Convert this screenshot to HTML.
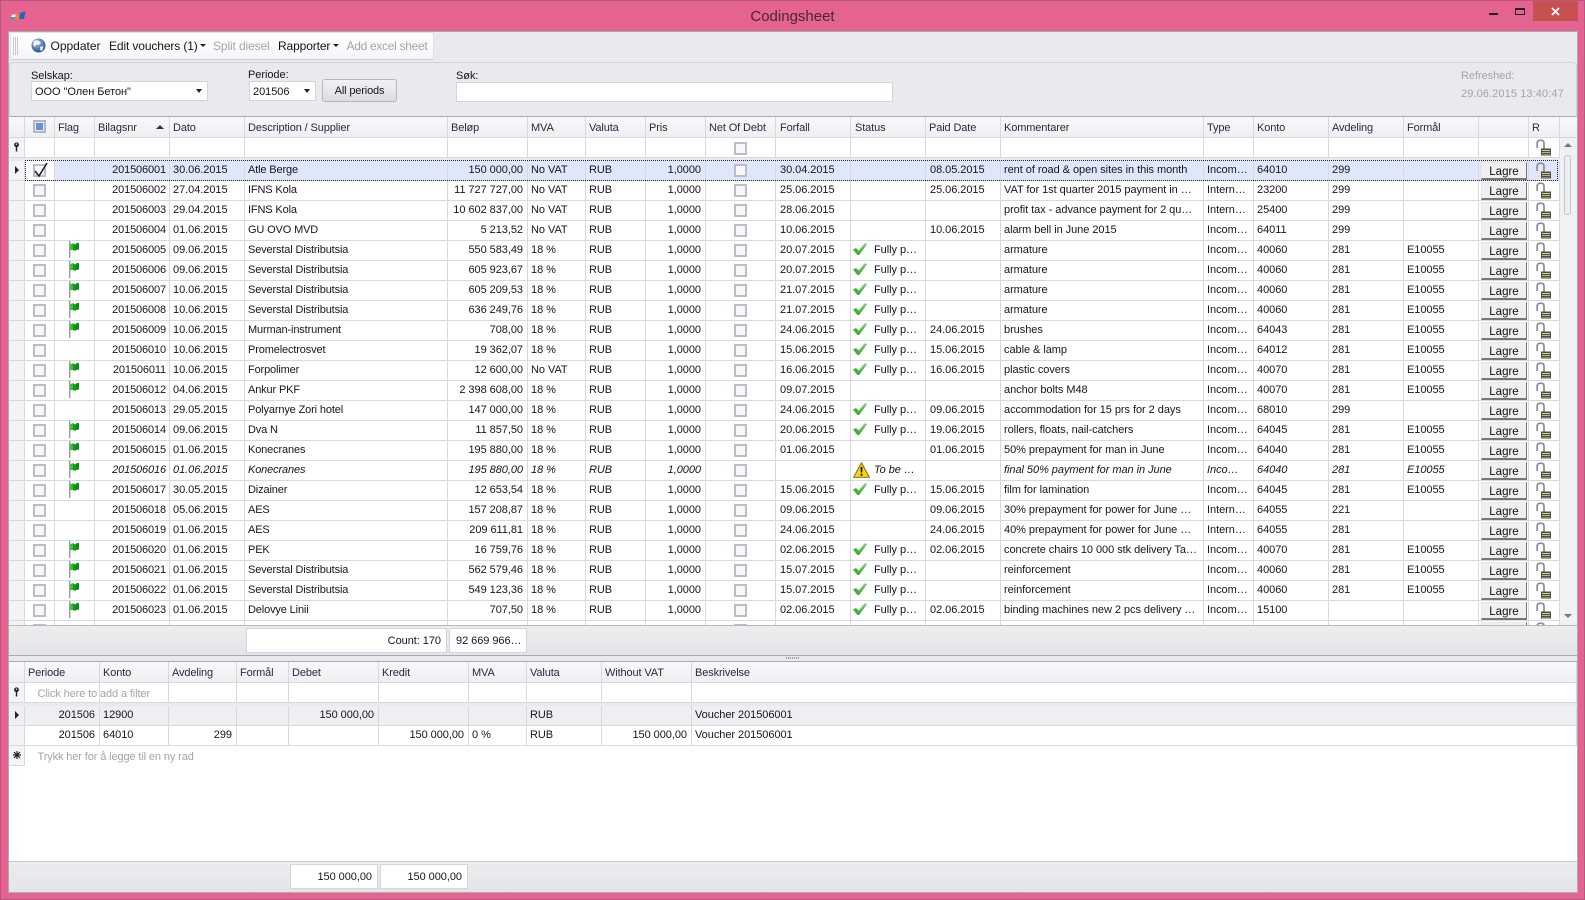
<!DOCTYPE html>
<html><head><meta charset="utf-8"><title>Codingsheet</title>
<style>
*{box-sizing:border-box}
html,body{margin:0;padding:0;width:1585px;height:900px;overflow:hidden}
body{position:relative;background:#e46390;font:11px "Liberation Sans","Noto Sans CJK SC",sans-serif;letter-spacing:-.05px;color:#15151f;box-shadow:inset 0 0 0 1px #b9587e}
.a{position:absolute}
.t{position:absolute;white-space:nowrap;line-height:14px}
.tb{font-size:12px;letter-spacing:-.12px}
#win{position:absolute;left:8px;top:31px;width:1570px;height:862px;background:#e9eaee;border:1px solid #a9aab4}
table{position:absolute;left:0;table-layout:fixed;border-collapse:separate;border-spacing:0}
td,th{position:relative;padding:0 3px;border-right:1px solid #d8d9e0;border-bottom:1px solid #d8d9e0;white-space:nowrap;overflow:hidden;font-weight:400;text-align:left;vertical-align:top;line-height:19px;height:20px;background:#fff}
th{height:21px;line-height:18px;padding-top:2px;letter-spacing:-.12px;background:linear-gradient(#f8f8fa,#eeeff2);color:#2a2a3e}
td.i{background:#f3f4f7;padding:0}
td.r{text-align:right;padding-right:4px}
#up td:nth-child(4){letter-spacing:-.13px;padding-right:3px}
#up td:nth-child(6){letter-spacing:-.14px}
#up td:nth-child(12),#up td:nth-child(14),#up th:nth-child(12),#up th:nth-child(13){padding-left:4px}
tr.b td{height:3px;padding:0;border:0;background:#e9eaee;font-size:0;line-height:0}
tr.sel td{background:#dfe8fa}
tr.sel td.k{background:#fff}
tr.sel td.i{background:#f3f4f7}
tr.it td{font-style:italic}
tr.g td{background:#eeeff2}
i.c{position:absolute;width:13px;height:13px;top:3px;left:8px;border:2px solid #bcbdc9;background:#f7f7f8}
td.n i.c{left:28px}
svg.f{position:absolute;left:13px;top:0;width:12px;height:17px}
svg.o{position:absolute;left:2px;top:2px;width:14px;height:12px}
svg.w{position:absolute;left:2px;top:1px;width:17px;height:16px}
svg.l{position:absolute;left:7px;top:1px;width:15px;height:17px}
b.l{position:absolute;left:2px;top:1px;width:46px;height:18px;background:#f0f0f0;border:1px solid #e6e6e8;border-right:1px solid #77777b;border-bottom:2px solid #77777b;font-weight:400;font-style:normal;text-align:center;line-height:18px;color:#111;font-size:11.5px;letter-spacing:0}
td.s{padding-left:23px}
.tri{position:absolute;width:0;height:0;border-style:solid;border-color:transparent}
.dn{border-width:4px 3.5px 0;border-top-color:#222}
.up{border-width:0 4px 4px;border-bottom-color:#333}
.rt{border-width:4px 0 4px 4px;border-left-color:#222}
.box{position:absolute;background:#fff;border:1px solid #d4d5dc;white-space:nowrap;text-align:right;line-height:24px;padding:0 5px}
.foot{position:absolute;left:9px;width:1568px;background:linear-gradient(#eceded,#e3e4e9)}
.gray{color:#a3a3ae}
</style></head>
<body>
<svg width="0" height="0" style="position:absolute"><defs>
<symbol id="fl" viewBox="0 0 12 17"><rect x="1" y="0" width="1.4" height="17" fill="#9a9a9e"/><path d="M2.4 3 L6 2 L6 9 L2.4 9Z" fill="#2fc22f"/><path d="M5 3 L8 3.2 L8 9.6 L5 9.4Z" fill="#139a13"/><path d="M8 2.2 L11 2 L11 8.5 L8 9Z" fill="#0f8a1f"/></symbol>
<symbol id="ok" viewBox="0 0 14 12"><path d="M0 6.5 L3 5 L5.5 7.5 L11.5 0.5 L14 1 L6.2 12 L4.3 12Z" fill="#46ad3f"/><path d="M3 5 L5.5 7.5 L11.5 .5 L14 1 L6 8.5Z" fill="#7fd36f"/></symbol>
<symbol id="wa" viewBox="0 0 17 16"><path d="M8.5 .7 L16.3 15.3 L.7 15.3Z" fill="#f6d41e" stroke="#9a7f10" stroke-width="1.2" stroke-linejoin="round"/><path d="M7.5 5 H9.5 L9.2 10.5 H7.8Z M7.6 11.8 H9.4 V13.6 H7.6Z" fill="#111"/></symbol>
<symbol id="lk" viewBox="0 0 15 17"><path d="M1.2 9 V4 Q1.2 1.2 4.5 1.2 Q8 1.2 8 4 V9.5" fill="none" stroke="#8c8d91" stroke-width="1.7"/><rect x="5" y="9.5" width="10" height="7" fill="#4c4c48"/><rect x="6" y="11" width="8" height="1" fill="#d5cf96"/><rect x="6" y="13" width="8" height="1" fill="#bdb67f"/><rect x="6" y="15" width="8" height="1" fill="#8f8a60"/></symbol>
<symbol id="pin" viewBox="0 0 7 10"><circle cx="3.5" cy="2.8" r="2.4" fill="#222"/><circle cx="3.5" cy="2.2" r=".8" fill="#ddd"/><rect x="2.8" y="5" width="1.4" height="4.5" fill="#222"/></symbol>
</defs></svg>

<!-- title bar -->
<svg class="a" style="left:10px;top:11px" width="16" height="9" viewBox="0 0 16 9"><path d="M0 6 H5 L4 8.5 H0Z" fill="#39a6a0"/><path d="M2 3.5 L6 3.5 L5 6 H1Z" fill="#e9edf2"/><path d="M6 3 L10 3 L9 8 H5Z" fill="#e8892c"/><path d="M10 2 L15.5 .3 L14 8 H9Z" fill="#1f66c4"/></svg>
<div class="t" style="left:0;width:1585px;top:8px;text-align:center;font-size:15px;line-height:18px;letter-spacing:0;color:#4a2636">Codingsheet</div>
<div class="a" style="left:1489px;top:13px;width:9px;height:2px;background:#2a1c22"></div>
<div class="a" style="left:1515px;top:8px;width:10px;height:7px;border:1px solid #2a1c22;border-top-width:2px"></div>
<div class="a" style="left:1533px;top:1px;width:45px;height:20px;background:#c75050"></div>
<svg class="a" style="left:1551px;top:7px" width="9" height="9" viewBox="0 0 9 9"><path d="M1 1 L8 8 M8 1 L1 8" stroke="#fff" stroke-width="1.8"/></svg>

<div id="win"></div>

<!-- toolbar -->
<div class="a" style="left:10px;top:32px;width:424px;height:28px;background:linear-gradient(#fff,#f6f6f8);border:1px solid #e0e1e6;border-bottom:1px solid #cfd0d8;border-radius:2px"></div>
<div class="a" style="left:13px;top:37px;width:5px;height:18px;background:repeating-linear-gradient(90deg,#c8c9d0 0 1px,transparent 1px 2px)"></div>
<svg class="a" style="left:31px;top:38px" width="15" height="15" viewBox="0 0 15 15"><defs><radialGradient id="gl" cx=".4" cy=".3" r=".8"><stop offset="0" stop-color="#9fc4ef"/><stop offset="1" stop-color="#1e3f86"/></radialGradient></defs><circle cx="7.5" cy="7.5" r="7" fill="url(#gl)"/><path d="M3 3 Q6 1.5 8 3 L10 5 L7.5 7 L5 6.5 L4 9 L2 7Z M9 9 L12.5 8 L11.5 12 L9.5 13Z" fill="#f2f5fa"/></svg>
<div class="t tb" style="left:50.5px;top:39px;letter-spacing:0">Oppdater</div>
<div class="t tb" style="left:109px;top:39px">Edit vouchers (1)</div>
<div class="tri dn" style="left:200px;top:44px;border-width:3px 3px 0"></div>
<div class="t gray tb" style="left:213px;top:39px">Split diesel</div>
<div class="t tb" style="left:278px;top:39px">Rapporter</div>
<div class="tri dn" style="left:333px;top:44px;border-width:3px 3px 0"></div>
<div class="t gray tb" style="left:346.5px;top:39px;letter-spacing:-.3px">Add excel sheet</div>

<!-- filter panel -->
<div class="a" style="left:9px;top:62px;width:1568px;height:55px;background:#e9eaee;border:1px solid #d2d3da;border-bottom:1px solid #a9aab4;border-radius:4px 4px 0 0"></div>
<div class="t" style="left:31px;top:69px">Selskap:</div>
<div class="a" style="left:31px;top:81px;width:177px;height:20px;background:#fff;border:1px solid #d4d5dc"></div>
<div class="t" style="left:35px;top:85px">ООО "Олен Бетон"</div>
<div class="tri dn" style="left:196px;top:89px"></div>
<div class="t" style="left:248px;top:68px">Periode:</div>
<div class="a" style="left:249px;top:81px;width:67px;height:20px;background:#fff;border:1px solid #d4d5dc"></div>
<div class="t" style="left:253px;top:85px">201506</div>
<div class="tri dn" style="left:304px;top:89px"></div>
<div class="a" style="left:322px;top:79px;width:75px;height:23px;background:linear-gradient(#f1f1f4,#dcdde3);border:1px solid #b5b6bf;border-radius:3px;text-align:center;line-height:23px;letter-spacing:-.15px">All periods</div>
<div class="t" style="left:456px;top:69px">Søk:</div>
<div class="a" style="left:456px;top:82px;width:437px;height:20px;background:#fff;border:1px solid #d4d5dc"></div>
<div class="t gray" style="left:1461px;top:69px">Refreshed:</div>
<div class="t gray" style="left:1461px;top:87px;letter-spacing:.1px">29.06.2015 13:40:47</div>

<!-- upper grid -->
<div id="up" class="a" style="left:9px;top:117px;width:1568px;height:508px;overflow:hidden;background:#fff">
<table style="top:0;width:1551px">
<colgroup><col style="width:16px"><col style="width:30px"><col style="width:40px"><col style="width:75px"><col style="width:75px"><col style="width:203px"><col style="width:80px"><col style="width:58px"><col style="width:60px"><col style="width:60px"><col style="width:70px"><col style="width:75px"><col style="width:75px"><col style="width:75px"><col style="width:203px"><col style="width:50px"><col style="width:75px"><col style="width:75px"><col style="width:75px"><col style="width:50px"><col style="width:31px"></colgroup>
<tr><th><th><i class="c" style="top:3px;left:8px;background:#6e8ed8;border-color:#b4b6c6;outline:1px solid #e8e8f0;outline-offset:-3px"></i><th>Flag<th>Bilagsnr<span class="tri up" style="left:61px;top:8px"></span><th>Dato<th>Description / Supplier<th>Beløp<th>MVA<th>Valuta<th>Pris<th>Net Of Debt<th>Forfall<th>Status<th>Paid Date<th>Kommentarer<th>Type<th>Konto<th>Avdeling<th>Formål<th><th>R
<tr><td class="i"><svg class="a" style="left:4px;top:4px" width="7" height="10"><use href="#pin"/></svg><td><td><td><td><td><td><td><td><td><td class="n"><i class="c" style="top:4px"></i><td><td><td><td><td><td><td><td><td><td><svg class="l"><use href="#lk"/></svg>
<tr class="b"><td colspan="21">
<tr class="sel"><td class="i"><span class="tri rt" style="left:6px;top:5px"></span><td class="k"><i class="c"></i><svg class="a" style="left:9px;top:1px" width="15" height="16" viewBox="0 0 15 16"><path d="M1 9 L5 14 L13 1" fill="none" stroke="#222" stroke-width="1.6"/></svg><td><td class="r">201506001<td>30.06.2015<td>Atle Berge<td class="r">150 000,00<td>No VAT<td>RUB<td class="r">1,0000<td class="n"><i class="c"></i><td>30.04.2015<td><td>08.05.2015<td>rent of road &amp; open sites in this month<td>Incom…<td>64010<td>299<td><td><b class="l">Lagre</b><td><svg class="l"><use href="#lk"/></svg>
<tr><td class="i"><td class="k"><i class="c"></i><td><td class="r">201506002<td>27.04.2015<td>IFNS Kola<td class="r">11 727 727,00<td>No VAT<td>RUB<td class="r">1,0000<td class="n"><i class="c"></i><td>25.06.2015<td><td>25.06.2015<td>VAT for 1st quarter 2015 payment in …<td>Intern…<td>23200<td>299<td><td><b class="l">Lagre</b><td><svg class="l"><use href="#lk"/></svg>
<tr><td class="i"><td class="k"><i class="c"></i><td><td class="r">201506003<td>29.04.2015<td>IFNS Kola<td class="r">10 602 837,00<td>No VAT<td>RUB<td class="r">1,0000<td class="n"><i class="c"></i><td>28.06.2015<td><td><td>profit tax - advance payment for 2 qu…<td>Intern…<td>25400<td>299<td><td><b class="l">Lagre</b><td><svg class="l"><use href="#lk"/></svg>
<tr><td class="i"><td class="k"><i class="c"></i><td><td class="r">201506004<td>01.06.2015<td>GU OVO MVD<td class="r">5 213,52<td>No VAT<td>RUB<td class="r">1,0000<td class="n"><i class="c"></i><td>10.06.2015<td><td>10.06.2015<td>alarm bell in June 2015<td>Incom…<td>64011<td>299<td><td><b class="l">Lagre</b><td><svg class="l"><use href="#lk"/></svg>
<tr><td class="i"><td class="k"><i class="c"></i><td><svg class="f"><use href="#fl"/></svg><td class="r">201506005<td>09.06.2015<td>Severstal Distributsia<td class="r">550 583,49<td>18 %<td>RUB<td class="r">1,0000<td class="n"><i class="c"></i><td>20.07.2015<td class="s"><svg class="o"><use href="#ok"/></svg>Fully p…<td><td>armature<td>Incom…<td>40060<td>281<td>E10055<td><b class="l">Lagre</b><td><svg class="l"><use href="#lk"/></svg>
<tr><td class="i"><td class="k"><i class="c"></i><td><svg class="f"><use href="#fl"/></svg><td class="r">201506006<td>09.06.2015<td>Severstal Distributsia<td class="r">605 923,67<td>18 %<td>RUB<td class="r">1,0000<td class="n"><i class="c"></i><td>20.07.2015<td class="s"><svg class="o"><use href="#ok"/></svg>Fully p…<td><td>armature<td>Incom…<td>40060<td>281<td>E10055<td><b class="l">Lagre</b><td><svg class="l"><use href="#lk"/></svg>
<tr><td class="i"><td class="k"><i class="c"></i><td><svg class="f"><use href="#fl"/></svg><td class="r">201506007<td>10.06.2015<td>Severstal Distributsia<td class="r">605 209,53<td>18 %<td>RUB<td class="r">1,0000<td class="n"><i class="c"></i><td>21.07.2015<td class="s"><svg class="o"><use href="#ok"/></svg>Fully p…<td><td>armature<td>Incom…<td>40060<td>281<td>E10055<td><b class="l">Lagre</b><td><svg class="l"><use href="#lk"/></svg>
<tr><td class="i"><td class="k"><i class="c"></i><td><svg class="f"><use href="#fl"/></svg><td class="r">201506008<td>10.06.2015<td>Severstal Distributsia<td class="r">636 249,76<td>18 %<td>RUB<td class="r">1,0000<td class="n"><i class="c"></i><td>21.07.2015<td class="s"><svg class="o"><use href="#ok"/></svg>Fully p…<td><td>armature<td>Incom…<td>40060<td>281<td>E10055<td><b class="l">Lagre</b><td><svg class="l"><use href="#lk"/></svg>
<tr><td class="i"><td class="k"><i class="c"></i><td><svg class="f"><use href="#fl"/></svg><td class="r">201506009<td>10.06.2015<td>Murman-instrument<td class="r">708,00<td>18 %<td>RUB<td class="r">1,0000<td class="n"><i class="c"></i><td>24.06.2015<td class="s"><svg class="o"><use href="#ok"/></svg>Fully p…<td>24.06.2015<td>brushes<td>Incom…<td>64043<td>281<td>E10055<td><b class="l">Lagre</b><td><svg class="l"><use href="#lk"/></svg>
<tr><td class="i"><td class="k"><i class="c"></i><td><td class="r">201506010<td>10.06.2015<td>Promelectrosvet<td class="r">19 362,07<td>18 %<td>RUB<td class="r">1,0000<td class="n"><i class="c"></i><td>15.06.2015<td class="s"><svg class="o"><use href="#ok"/></svg>Fully p…<td>15.06.2015<td>cable &amp; lamp<td>Incom…<td>64012<td>281<td>E10055<td><b class="l">Lagre</b><td><svg class="l"><use href="#lk"/></svg>
<tr><td class="i"><td class="k"><i class="c"></i><td><svg class="f"><use href="#fl"/></svg><td class="r">201506011<td>10.06.2015<td>Forpolimer<td class="r">12 600,00<td>No VAT<td>RUB<td class="r">1,0000<td class="n"><i class="c"></i><td>16.06.2015<td class="s"><svg class="o"><use href="#ok"/></svg>Fully p…<td>16.06.2015<td>plastic covers<td>Incom…<td>40070<td>281<td>E10055<td><b class="l">Lagre</b><td><svg class="l"><use href="#lk"/></svg>
<tr><td class="i"><td class="k"><i class="c"></i><td><svg class="f"><use href="#fl"/></svg><td class="r">201506012<td>04.06.2015<td>Ankur PKF<td class="r">2 398 608,00<td>18 %<td>RUB<td class="r">1,0000<td class="n"><i class="c"></i><td>09.07.2015<td><td><td>anchor bolts M48<td>Incom…<td>40070<td>281<td>E10055<td><b class="l">Lagre</b><td><svg class="l"><use href="#lk"/></svg>
<tr><td class="i"><td class="k"><i class="c"></i><td><td class="r">201506013<td>29.05.2015<td>Polyarnye Zori hotel<td class="r">147 000,00<td>18 %<td>RUB<td class="r">1,0000<td class="n"><i class="c"></i><td>24.06.2015<td class="s"><svg class="o"><use href="#ok"/></svg>Fully p…<td>09.06.2015<td>accommodation for 15 prs for 2 days<td>Incom…<td>68010<td>299<td><td><b class="l">Lagre</b><td><svg class="l"><use href="#lk"/></svg>
<tr><td class="i"><td class="k"><i class="c"></i><td><svg class="f"><use href="#fl"/></svg><td class="r">201506014<td>09.06.2015<td>Dva N<td class="r">11 857,50<td>18 %<td>RUB<td class="r">1,0000<td class="n"><i class="c"></i><td>20.06.2015<td class="s"><svg class="o"><use href="#ok"/></svg>Fully p…<td>19.06.2015<td>rollers, floats, nail-catchers<td>Incom…<td>64045<td>281<td>E10055<td><b class="l">Lagre</b><td><svg class="l"><use href="#lk"/></svg>
<tr><td class="i"><td class="k"><i class="c"></i><td><svg class="f"><use href="#fl"/></svg><td class="r">201506015<td>01.06.2015<td>Konecranes<td class="r">195 880,00<td>18 %<td>RUB<td class="r">1,0000<td class="n"><i class="c"></i><td>01.06.2015<td><td>01.06.2015<td>50% prepayment for man in June<td>Incom…<td>64040<td>281<td>E10055<td><b class="l">Lagre</b><td><svg class="l"><use href="#lk"/></svg>
<tr class="it"><td class="i"><td class="k"><i class="c"></i><td><svg class="f"><use href="#fl"/></svg><td class="r">201506016<td>01.06.2015<td>Konecranes<td class="r">195 880,00<td>18 %<td>RUB<td class="r">1,0000<td class="n"><i class="c"></i><td><td class="s"><svg class="w"><use href="#wa"/></svg>To be …<td><td>final 50% payment for man in June<td>Inco…<td>64040<td>281<td>E10055<td><b class="l">Lagre</b><td><svg class="l"><use href="#lk"/></svg>
<tr><td class="i"><td class="k"><i class="c"></i><td><svg class="f"><use href="#fl"/></svg><td class="r">201506017<td>30.05.2015<td>Dizainer<td class="r">12 653,54<td>18 %<td>RUB<td class="r">1,0000<td class="n"><i class="c"></i><td>15.06.2015<td class="s"><svg class="o"><use href="#ok"/></svg>Fully p…<td>15.06.2015<td>film for lamination<td>Incom…<td>64045<td>281<td>E10055<td><b class="l">Lagre</b><td><svg class="l"><use href="#lk"/></svg>
<tr><td class="i"><td class="k"><i class="c"></i><td><td class="r">201506018<td>05.06.2015<td>AES<td class="r">157 208,87<td>18 %<td>RUB<td class="r">1,0000<td class="n"><i class="c"></i><td>09.06.2015<td><td>09.06.2015<td>30% prepayment for power for June …<td>Intern…<td>64055<td>221<td><td><b class="l">Lagre</b><td><svg class="l"><use href="#lk"/></svg>
<tr><td class="i"><td class="k"><i class="c"></i><td><td class="r">201506019<td>01.06.2015<td>AES<td class="r">209 611,81<td>18 %<td>RUB<td class="r">1,0000<td class="n"><i class="c"></i><td>24.06.2015<td><td>24.06.2015<td>40% prepayment for power for June …<td>Intern…<td>64055<td>281<td><td><b class="l">Lagre</b><td><svg class="l"><use href="#lk"/></svg>
<tr><td class="i"><td class="k"><i class="c"></i><td><svg class="f"><use href="#fl"/></svg><td class="r">201506020<td>01.06.2015<td>PEK<td class="r">16 759,76<td>18 %<td>RUB<td class="r">1,0000<td class="n"><i class="c"></i><td>02.06.2015<td class="s"><svg class="o"><use href="#ok"/></svg>Fully p…<td>02.06.2015<td>concrete chairs 10 000 stk delivery Ta…<td>Incom…<td>40070<td>281<td>E10055<td><b class="l">Lagre</b><td><svg class="l"><use href="#lk"/></svg>
<tr><td class="i"><td class="k"><i class="c"></i><td><svg class="f"><use href="#fl"/></svg><td class="r">201506021<td>01.06.2015<td>Severstal Distributsia<td class="r">562 579,46<td>18 %<td>RUB<td class="r">1,0000<td class="n"><i class="c"></i><td>15.07.2015<td class="s"><svg class="o"><use href="#ok"/></svg>Fully p…<td><td>reinforcement<td>Incom…<td>40060<td>281<td>E10055<td><b class="l">Lagre</b><td><svg class="l"><use href="#lk"/></svg>
<tr><td class="i"><td class="k"><i class="c"></i><td><svg class="f"><use href="#fl"/></svg><td class="r">201506022<td>01.06.2015<td>Severstal Distributsia<td class="r">549 123,36<td>18 %<td>RUB<td class="r">1,0000<td class="n"><i class="c"></i><td>15.07.2015<td class="s"><svg class="o"><use href="#ok"/></svg>Fully p…<td><td>reinforcement<td>Incom…<td>40060<td>281<td>E10055<td><b class="l">Lagre</b><td><svg class="l"><use href="#lk"/></svg>
<tr><td class="i"><td class="k"><i class="c"></i><td><svg class="f"><use href="#fl"/></svg><td class="r">201506023<td>01.06.2015<td>Delovye Linii<td class="r">707,50<td>18 %<td>RUB<td class="r">1,0000<td class="n"><i class="c"></i><td>02.06.2015<td class="s"><svg class="o"><use href="#ok"/></svg>Fully p…<td>02.06.2015<td>binding machines new 2 pcs delivery …<td>Incom…<td>15100<td><td><td><b class="l">Lagre</b><td><svg class="l"><use href="#lk"/></svg>
<tr><td class="i"><td class="k"><i class="c"></i><td><td><td><td><td><td><td><td><td class="n"><i class="c"></i><td><td><td><td><td><td><td><td><td><b class="l">Lagre</b><td><svg class="l"><use href="#lk"/></svg>
</table>
<!-- selection dots -->
<div class="a" style="left:16px;top:43px;width:1533px;height:21px;border:1px dotted #222;pointer-events:none"></div>
<!-- scrollbar -->
<div class="a" style="left:1551px;top:0;width:17px;height:21px;background:linear-gradient(#f8f8fa,#eeeff2);border-bottom:1px solid #d8d9e0"></div>
<div class="a" style="left:1551px;top:21px;width:17px;height:487px;background:#f0f1f4"></div>
<div class="tri up" style="left:1555px;top:26px;border-bottom-color:#777"></div>
<div class="a" style="left:1555px;top:38px;width:7px;height:60px;background:#eeeff3;border:1px solid #c3c4ce;border-radius:3px"></div>
<div class="tri dn" style="left:1555px;top:497px;border-width:4px 4px 0;border-top-color:#777"></div>
</div>

<!-- upper footer -->
<div class="foot" style="top:625px;height:31px;border-top:1px solid #b6b7c0;border-bottom:1px solid #a9aab4"></div>
<div class="box" style="left:246px;top:628px;width:201px;height:25px">Count: 170</div>
<div class="box" style="left:449px;top:628px;width:78px;height:25px;text-align:left;padding-left:6px">92 669 966…</div>
<div class="a" style="left:786px;top:657px;width:14px;height:2px;background:repeating-linear-gradient(90deg,#9a9ba6 0 1px,transparent 1px 2px)"></div>

<!-- lower grid -->
<div class="a" style="left:9px;top:661px;width:1568px;height:200px;background:#fff;border-top:1px solid #a9aab4">
<table style="top:0;width:1568px">
<colgroup><col style="width:16px"><col style="width:75px"><col style="width:69px"><col style="width:68px"><col style="width:52px"><col style="width:90px"><col style="width:90px"><col style="width:58px"><col style="width:75px"><col style="width:90px"><col style="width:885px"></colgroup>
<tr><th><th>Periode<th>Konto<th>Avdeling<th>Formål<th>Debet<th>Kredit<th>MVA<th>Valuta<th>Without VAT<th>Beskrivelse
<tr><td class="i"><svg class="a" style="left:4px;top:4px" width="7" height="10"><use href="#pin"/></svg><td><td><td><td><td><td><td><td><td><td>
<tr class="b"><td colspan="11">
<tr class="g"><td class="i"><span class="tri rt" style="left:6px;top:5px"></span><td class="r">201506<td>12900<td><td><td class="r">150 000,00<td><td><td>RUB<td><td>Voucher 201506001
<tr><td class="i"><td class="r">201506<td>64010<td class="r">299<td><td><td class="r">150 000,00<td>0 %<td>RUB<td class="r">150 000,00<td>Voucher 201506001
<tr><td class="i"><svg class="a" style="left:4px;top:5px" width="8" height="8" viewBox="0 0 8 8"><path d="M4 0 V8 M0 4 H8 M1 1 L7 7 M7 1 L1 7" stroke="#222" stroke-width="1.2"/></svg><td colspan="10" style="border:0">
</table>
</div>
<div class="t gray" style="left:37.5px;top:687px;letter-spacing:-.12px">Click here to add a filter</div>
<div class="t gray" style="left:37.5px;top:750px;letter-spacing:-.12px">Trykk her for å legge til en ny rad</div>

<!-- lower footer -->
<div class="foot" style="top:861px;height:31px;border-top:1px solid #c6c7d0"></div>
<div class="box" style="left:290px;top:864px;width:88px;height:25px">150 000,00</div>
<div class="box" style="left:380px;top:864px;width:88px;height:25px">150 000,00</div>
</body></html>
